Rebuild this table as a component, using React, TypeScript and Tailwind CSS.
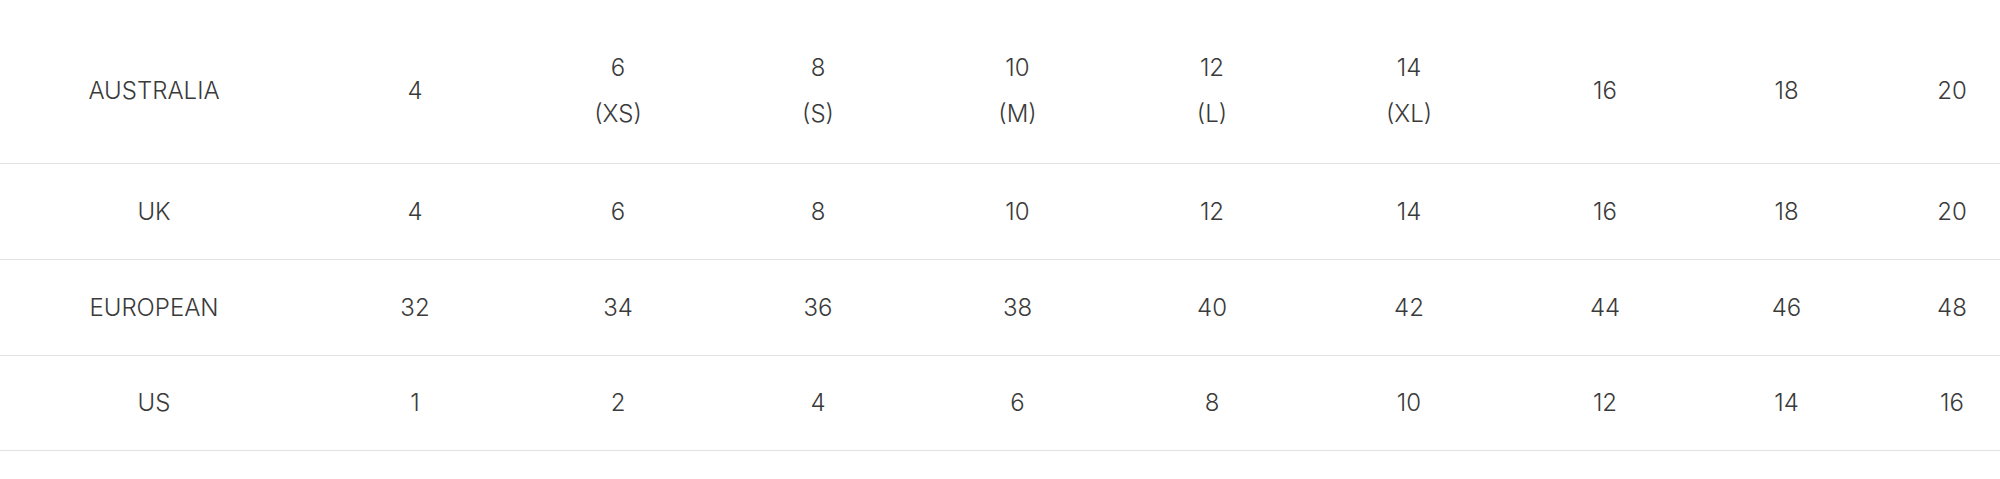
import React from "react";

const cols =
  "grid grid-cols-[308px_214px_192px_208px_191px_198px_196px_196px_167px_130px]";

const rows: { label: string; sizes: string[][] }[] = [
  {
    label: "AUSTRALIA",
    sizes: [["4"], ["6", "(XS)"], ["8", "(S)"], ["10", "(M)"], ["12", "(L)"], ["14", "(XL)"], ["16"], ["18"], ["20"]],
  },
  { label: "UK", sizes: [["4"], ["6"], ["8"], ["10"], ["12"], ["14"], ["16"], ["18"], ["20"]] },
  { label: "EUROPEAN", sizes: [["32"], ["34"], ["36"], ["38"], ["40"], ["42"], ["44"], ["46"], ["48"]] },
  { label: "US", sizes: [["1"], ["2"], ["4"], ["6"], ["8"], ["10"], ["12"], ["14"], ["16"]] },
];

const Cell = ({ lines, last }: { lines: string[]; last?: boolean }) => (
  <div
    className={`flex flex-col items-center justify-center text-center ${
      last ? "pl-[34px]" : ""
    }`}
  >
    {lines.map((l) => (
      <span key={l}>{l}</span>
    ))}
  </div>
);

export default function App() {
  return (
    <div
      className="w-[2000px] h-[479px] bg-white text-[#3a3a3a] text-[24px] font-light leading-[46px]"
      style={{ fontFamily: "Inter, 'Noto Sans', sans-serif" }}
    >
      {rows.map((row, i) => (
        <div
          key={row.label}
          className={`${cols} border-b border-[#e2e2e2] ${
            i === 0 ? "h-[164px] pt-[19px]" : i === 3 ? "h-[95px]" : "h-[96px]"
          }`}
        >
          <Cell lines={[row.label]} />
          {row.sizes.map((s, j) => (
            <Cell key={j} lines={s} last={j === row.sizes.length - 1} />
          ))}
        </div>
      ))}
    </div>
  );
}
